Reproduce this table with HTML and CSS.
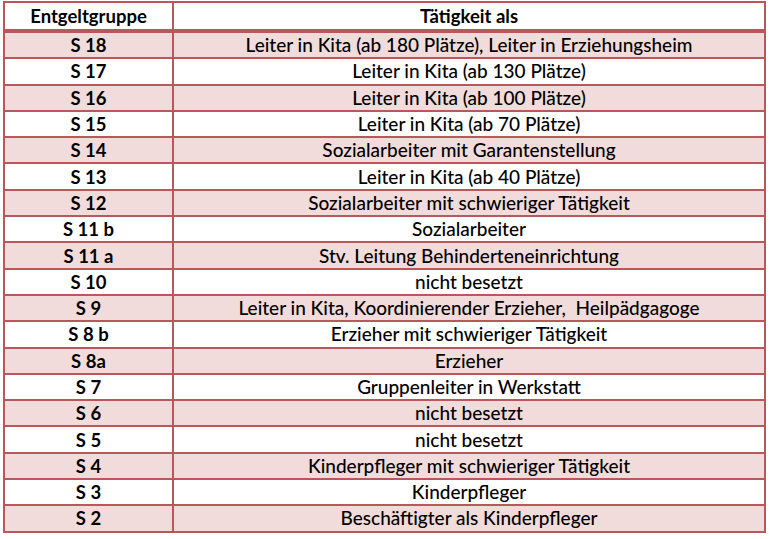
FILE: index.html
```html
<!DOCTYPE html>
<html lang="de">
<head>
<meta charset="utf-8">
<title>Entgeltgruppen</title>
<link rel="stylesheet" href="styles.css">
</head>
<body>
<table class="grid">
  <thead>
    <tr class="head"><th class="c1">Entgeltgruppe</th><th class="c2">Tätigkeit als</th></tr>
  </thead>
  <tbody>
    <tr class="pink"><td class="c1">S 18</td><td class="c2">Leiter in Kita (ab 180 Plätze), Leiter in Erziehungsheim</td></tr>
    <tr><td class="c1">S 17</td><td class="c2">Leiter in Kita (ab 130 Plätze)</td></tr>
    <tr class="pink"><td class="c1">S 16</td><td class="c2">Leiter in Kita (ab 100 Plätze)</td></tr>
    <tr><td class="c1">S 15</td><td class="c2">Leiter in Kita (ab 70 Plätze)</td></tr>
    <tr class="pink"><td class="c1">S 14</td><td class="c2">Sozialarbeiter mit Garantenstellung</td></tr>
    <tr><td class="c1">S 13</td><td class="c2">Leiter in Kita (ab 40 Plätze)</td></tr>
    <tr class="pink"><td class="c1">S 12</td><td class="c2">Sozialarbeiter mit schwieriger Tätigkeit</td></tr>
    <tr><td class="c1">S 11 b</td><td class="c2">Sozialarbeiter</td></tr>
    <tr class="pink"><td class="c1">S 11 a</td><td class="c2">Stv. Leitung Behinderteneinrichtung</td></tr>
    <tr><td class="c1">S 10</td><td class="c2">nicht besetzt</td></tr>
    <tr class="pink"><td class="c1">S 9</td><td class="c2">Leiter in Kita, Koordinierender Erzieher,&nbsp; Heilpädgagoge</td></tr>
    <tr><td class="c1">S 8 b</td><td class="c2">Erzieher mit schwieriger Tätigkeit</td></tr>
    <tr class="pink"><td class="c1">S 8a</td><td class="c2">Erzieher</td></tr>
    <tr><td class="c1">S 7</td><td class="c2">Gruppenleiter in Werkstatt</td></tr>
    <tr class="pink"><td class="c1">S 6</td><td class="c2">nicht besetzt</td></tr>
    <tr><td class="c1">S 5</td><td class="c2">nicht besetzt</td></tr>
    <tr class="pink"><td class="c1">S 4</td><td class="c2">Kinderpfleger mit schwieriger Tätigkeit</td></tr>
    <tr><td class="c1">S 3</td><td class="c2">Kinderpfleger</td></tr>
    <tr class="pink"><td class="c1">S 2</td><td class="c2">Beschäftigter als Kinderpfleger</td></tr>
  </tbody>
</table>
</body>
</html>
```
FILE: styles.css
```css
html, body {
  margin: 0;
  padding: 0;
  background: #ffffff;
}
body {
  padding: 1px 4px 0 3px;
  font-family: Lato, "Liberation Sans", sans-serif;
  font-size: 19px;
  color: #000000;
}
.grid {
  border-collapse: collapse;
  width: 763px;
  table-layout: fixed;
  border: 2px solid #a25a5c;
}
.grid th, .grid td {
  border: 2px solid #b9575b;
  text-align: center;
  padding: 0;
  line-height: 20px;
  vertical-align: middle;
}
.grid .c1 { width: 167px; }
.grid th {
  height: 26px;
  font-weight: bold;
  font-size: 18.5px;
  border-bottom: 4px solid #b9575b;
}
.grid td { height: 24.3px; }
.grid td.c2 { font-weight: 500; }
.grid td.c1 { font-weight: bold; font-size: 18.5px; }
.grid tr.pink td { background: #f2dcdb; }
```
